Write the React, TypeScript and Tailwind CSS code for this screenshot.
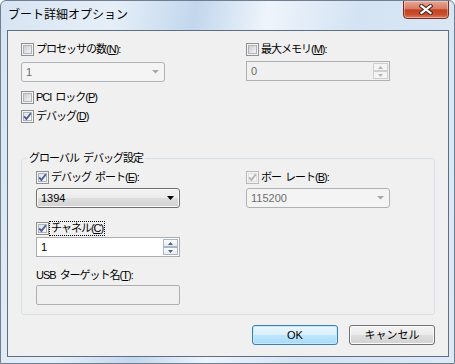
import clsx from "clsx";
import type { ReactNode } from "react";

type BoxProps = { checked?: boolean; disabled?: boolean };

const CheckBox = ({ checked = false, disabled = false }: BoxProps) => {
  const edge = disabled ? "#b8b8b8" : "#8e8f8f";
  const inner = disabled ? "#d0d0d0" : "#b0b4ba";
  return (
    <svg width="13" height="13" viewBox="0 0 13 13" className="shrink-0">
      <defs>
        <linearGradient id="cbFill" x1="0" y1="0" x2="1" y2="1">
          <stop offset="0" stopColor="#c6cad0" />
          <stop offset="1" stopColor="#f7f7f7" />
        </linearGradient>
        <linearGradient id="cbFillOn" x1="0" y1="0" x2="1" y2="1">
          <stop offset="0" stopColor="#dfe2e6" />
          <stop offset="1" stopColor="#fbfbfb" />
        </linearGradient>
      </defs>
      <rect x="0.5" y="0.5" width="12" height="12" fill="#f4f4f4" stroke={edge} />
      {disabled ? (
        <rect x="2.5" y="2.5" width="8" height="8" fill="#f4f4f4" stroke="#e0e0e0" />
      ) : (
        <rect x="2.5" y="2.5" width="8" height="8" fill={checked ? "url(#cbFillOn)" : "url(#cbFill)"} stroke={inner} />
      )}
      {checked && (
        <polyline
          points="3.2,6.4 5.4,9 9.8,3.2"
          fill="none"
          stroke={disabled ? "#b5b5b5" : "#4a609a"}
          strokeWidth="1.9"
        />
      )}
    </svg>
  );
};

type CheckProps = BoxProps & { focus?: boolean; className?: string; children: ReactNode };

const Check = ({ checked, disabled, focus, className, children }: CheckProps) => (
  <div className={clsx("flex h-[13px] items-center", className)}>
    <CheckBox checked={checked} disabled={disabled} />
    <span
      className={clsx(
        "ml-[1px] whitespace-nowrap px-[1px] leading-[13px]",
        focus && "outline outline-1 outline-dotted outline-black",
      )}
    >
      {children}
    </span>
  </div>
);

// 下線付きのアクセスキー
const Mn = ({ children }: { children: string }) => (
  <span className="underline underline-offset-1">{children}</span>
);

// 詰めた字間でも空白が潰れないように
const Gap = () => <span className="inline-block w-[4px]" />;

const Combo = ({ value, disabled, className }: { value: string; disabled?: boolean; className?: string }) => (
  <div
    className={clsx(
      "flex h-[20px] w-[144px] items-center rounded-[3px] border pl-[4px] pr-[5px]",
      disabled
        ? "border-[#adb2b5] bg-[#f4f4f4] text-[#6d6d6d]"
        : "border-[#707070] bg-[linear-gradient(#f3f3f3_0%,#ebebeb_50%,#dedede_51%,#d2d2d2_100%)] shadow-[inset_0_0_0_1px_#fbfbfb]",
      className,
    )}
  >
    <span className="flex-1 tracking-[0px]">{value}</span>
    {disabled ? (
      <svg width="7" height="4" viewBox="0 0 7 4">
        <polygon points="0,0 7,0 3.5,3.5" fill="#a5a7a9" />
      </svg>
    ) : (
      <svg width="7" height="4" viewBox="0 0 7 4">
        <polygon points="0,0 7,0 3.5,4" fill="#000" />
      </svg>
    )}
  </div>
);

const SpinBtn = ({ up, disabled }: { up?: boolean; disabled?: boolean }) => (
  <div
    className={clsx(
      "flex flex-1 items-center justify-center border",
      disabled
        ? "border-[#cfcfcf] bg-[#f4f4f4]"
        : "border-[#a9b6c6] bg-[linear-gradient(#fdfdfd,#e6ebf1)]",
    )}
  >
    <svg width="5" height="3" viewBox="0 0 5 3">
      <polygon points={up ? "0,3 5,3 2.5,0" : "0,0 5,0 2.5,3"} fill={disabled ? "#b4b4b4" : "#4c5f86"} />
    </svg>
  </div>
);

const Spin = ({ value, disabled, className }: { value: string; disabled?: boolean; className?: string }) => (
  <div
    className={clsx(
      "flex h-[20px] w-[144px] border",
      disabled ? "border-[#afafaf] bg-[#f0f0f0] text-[#6d6d6d]" : "border-[#abadb3] bg-white",
      className,
    )}
  >
    <span className="flex-1 pl-[4px] leading-[18px] tracking-[0px]">{value}</span>
    <div className="flex w-[16px] flex-col py-[1px] pr-[1px]">
      <SpinBtn up disabled={disabled} />
      <SpinBtn disabled={disabled} />
    </div>
  </div>
);

const Button = ({ children, primary }: { children: ReactNode; primary?: boolean }) => (
  <div
    className={clsx(
      "flex h-[20px] w-[86px] items-center justify-center rounded-[3px] border",
      primary
        ? "border-[#3c7fb1] bg-[linear-gradient(#eaf6fd_0%,#d9f0fc_50%,#bee6fd_51%,#a7d9f5_100%)] shadow-[inset_0_0_0_1px_#c6eafc]"
        : "border-[#707070] bg-[linear-gradient(#f3f3f3_0%,#ebebeb_50%,#dedede_51%,#d2d2d2_100%)] shadow-[inset_0_0_0_1px_#fbfbfb]",
    )}
  >
    {children}
  </div>
);

export default function App() {
  return (
    <div className="flex h-[364px] w-[455px] flex-col overflow-hidden rounded-t-[6px] border border-[#6f7f91] bg-[linear-gradient(100deg,#d7e4f2_0%,#e6eff8_22%,#c2d7ed_38%,#eef4fb_52%,#d3e3f3_70%,#dde9f5_100%)] pb-[6px] pl-[6px] pr-[5px] font-['Liberation_Sans','Noto_Sans_CJK_JP',sans-serif]">
      {/* タイトルバー */}
      <div className="flex h-[29px] shrink-0 items-start">
        <span className="ml-[1px] mt-[5px] flex-1 text-[12px] leading-[16px] text-black font-['Noto_Sans_CJK_JP',sans-serif]">
          ブート詳細オプション
        </span>
        <div className="-mt-[1px] flex h-[19px] w-[46px] items-center justify-center rounded-b-[4px] border border-[#7a2e22] bg-[linear-gradient(#e8a795_0%,#d97c65_45%,#c3421f_52%,#c9502f_80%,#de7f66_100%)] shadow-[inset_0_0_0_1px_rgba(255,255,255,0.35)]">
          <svg width="14" height="11" viewBox="0 0 14 11">
            <path d="M2.5 2 L11.5 9 M11.5 2 L2.5 9" stroke="#4d2a22" strokeWidth="4.2" strokeLinecap="square" />
            <path d="M2.5 2 L11.5 9 M11.5 2 L2.5 9" stroke="#ffffff" strokeWidth="2.2" strokeLinecap="square" />
          </svg>
        </div>
      </div>

      {/* クライアント領域 */}
      <div className="flex-1 border border-[#5f6f80] bg-[#f0f0f0] pl-[13px] pt-[12px] text-[11px] leading-[13px] tracking-[-1px] text-black">
        <div className="flex">
          <div className="w-[144px]">
            <Check>
              プロセッサの数(<Mn>N</Mn>):
            </Check>
            <Combo className="mt-[6px]" value="1" disabled />
            <Check className="mt-[9px]">
              PCI<Gap />ロック(<Mn>P</Mn>)
            </Check>
            <Check className="mt-[6px]" checked>
              デバッグ(<Mn>D</Mn>)
            </Check>
          </div>
          <div className="ml-[81px] w-[144px]">
            <Check>
              最大メモリ(<Mn>M</Mn>):
            </Check>
            <Spin className="mt-[5px]" value="0" disabled />
          </div>
        </div>

        <fieldset className="mt-[29px] w-[414px] rounded-[3px] border border-[#d5dfe5]">
          <legend className="ml-[5px] px-[2px] leading-[13px]">
            グローバル<Gap />デバッグ設定
          </legend>
          <div className="flex pb-[9px] pl-[14px] pt-[6px]">
            <div className="w-[144px]">
              <Check checked>
                デバッグ<Gap />ポート(<Mn>E</Mn>):
              </Check>
              <Combo className="mt-[4px]" value="1394" />
              <Check className="mt-[14px]" checked focus>
                チャネル(<Mn>C</Mn>)
              </Check>
              <Spin className="mt-[2px]" value="1" />
              <div className="mt-[12px] whitespace-nowrap">
                USB<Gap />ターゲット名(<Mn>T</Mn>):
              </div>
              <div className="mt-[3px] h-[20px] w-[144px] rounded-[2px] border border-[#afafaf] bg-[#f0f0f0]" />
            </div>
            <div className="ml-[66px] w-[144px]">
              <Check checked disabled>
                ボー<Gap />レート(<Mn>B</Mn>):
              </Check>
              <Combo className="mt-[4px]" value="115200" disabled />
            </div>
          </div>
        </fieldset>

        <div className="mt-[10px] flex w-[414px] justify-end gap-[11px] tracking-[0px]">
          <Button primary>OK</Button>
          <Button>キャンセル</Button>
        </div>
      </div>
    </div>
  );
}
